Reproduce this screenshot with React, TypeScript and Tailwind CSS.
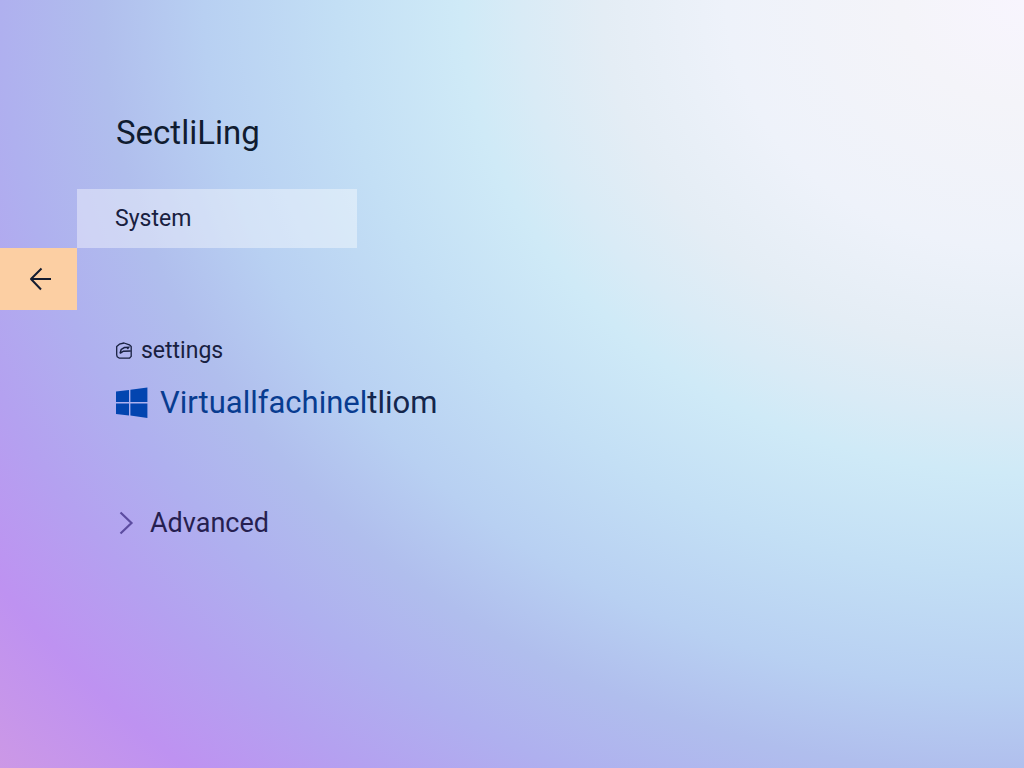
const BackArrow = () => (
  <svg width="24" height="24" viewBox="0 0 24 24" fill="none" stroke="currentColor" strokeWidth="2" aria-hidden="true">
    <path d="M24 12H4M14.5 1.5L4 12l10 10.5" strokeLinejoin="round" />
  </svg>
);

const SettingsIcon = () => (
  <svg width="17" height="18" viewBox="0 0 17 18" fill="none" stroke="currentColor" strokeWidth="1.3" aria-hidden="true">
    <path d="M3.4 2.2L8 1l5.4 1.8 1.8 1.6v10l-1.8 1.8H3.4l-2.2-1.4-.5-2V4.6z" strokeLinejoin="round" />
    <path d="M4 11.4L5.2 7.4l3.2-1.8 4.2-.2L11.4 7M4 11.4l3.4-2.2 7.4-.2" strokeWidth="1.5" />
  </svg>
);

const WindowsLogo = () => (
  <svg width="32" height="32" viewBox="0 0 32 32" fill="#0345b0" aria-hidden="true">
    <path d="M0 4.4L13 3v12H0zM14.4 2.8L31.4 0.6V15h-17zM0 16.4h13v12.2L0 27zM14.4 16.4h17V31l-17-2.4z" />
  </svg>
);

const Chevron = () => (
  <svg width="20" height="24" viewBox="0 0 20 24" fill="none" stroke="#5c4ca0" strokeWidth="2.2" aria-hidden="true">
    <path d="M4.5 1.5L15.5 12l-11 10.5" />
  </svg>
);

const App = () => {
  return (
    <div className="grid min-h-screen grid-cols-[77px_1fr] bg-[radial-gradient(100%_112%_at_100%_0%,#f8f5fe_0%,#f4f4f9_12%,#eef2fa_29%,#e4edf5_41%,#d9ebf6_49%,#cfeaf7_55%,#c3dff5_67%,#b8d0f2_80%,#b0beed_90%,#afb0ef_100%,#b4a1f0_110%,#be92f1_121%,#cc98e6_134%)] font-['Roboto','Liberation_Sans',sans-serif] text-[#182040]">
      <aside className="pt-[248px]">
        <button
          type="button"
          aria-label="Back"
          className="flex h-[62px] w-full items-center justify-center bg-[#fccfa3] text-[#131c30]"
        >
          <BackArrow />
        </button>
      </aside>

      <main className="flex flex-col items-start pt-[113px]">
        <h1 className="pl-[39px] text-[33px] leading-10 text-[#101c30]">SectliLing</h1>

        <a
          href="#system"
          className="mt-9 flex h-[59px] w-70 items-center bg-white/40 pl-[38px] text-[23px] leading-7"
        >
          System
        </a>

        {/* Settings group */}
        <section className="mt-[89px] pl-[39px]">
          <h2 className="flex items-center gap-2 text-[23px] leading-7">
            <SettingsIcon />
            settings
          </h2>
          <a href="#virtual" className="mt-[18px] flex items-center gap-3 text-[31px] leading-10 text-[#083c90]">
            <WindowsLogo />
            <span>
              Virtuallfachinel<span className="text-[#14264c]">tliom</span>
            </span>
          </a>
          <button type="button" className="mt-[84px] flex items-center gap-[14px] text-[27px] leading-8 text-[#261f50]">
            <Chevron />
            Advanced
          </button>
        </section>
      </main>
    </div>
  );
};

export default App;
